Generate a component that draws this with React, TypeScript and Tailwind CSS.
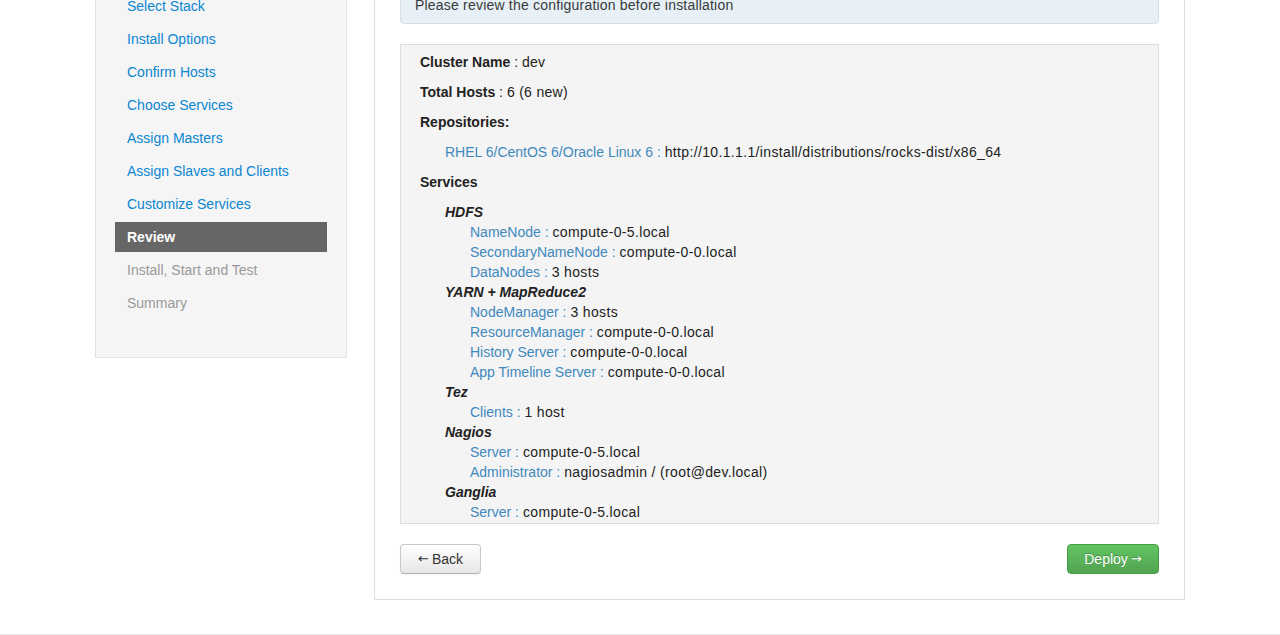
import React from "react";

const steps: { label: string; state: "done" | "active" | "disabled" }[] = [
  { label: "Get Started", state: "done" },
  { label: "Select Stack", state: "done" },
  { label: "Install Options", state: "done" },
  { label: "Confirm Hosts", state: "done" },
  { label: "Choose Services", state: "done" },
  { label: "Assign Masters", state: "done" },
  { label: "Assign Slaves and Clients", state: "done" },
  { label: "Customize Services", state: "done" },
  { label: "Review", state: "active" },
  { label: "Install, Start and Test", state: "disabled" },
  { label: "Summary", state: "disabled" },
];

const services: { name: string; comps: [string, string][] }[] = [
  {
    name: "HDFS",
    comps: [
      ["NameNode", "compute-0-5.local"],
      ["SecondaryNameNode", "compute-0-0.local"],
      ["DataNodes", "3 hosts"],
    ],
  },
  {
    name: "YARN + MapReduce2",
    comps: [
      ["NodeManager", "3 hosts"],
      ["ResourceManager", "compute-0-0.local"],
      ["History Server", "compute-0-0.local"],
      ["App Timeline Server", "compute-0-0.local"],
    ],
  },
  { name: "Tez", comps: [["Clients", "1 host"]] },
  {
    name: "Nagios",
    comps: [
      ["Server", "compute-0-5.local"],
      ["Administrator", "nagiosadmin / (root@dev.local)"],
    ],
  },
  {
    name: "Ganglia",
    comps: [
      ["Server", "compute-0-5.local"],
      ["Monitors", "6 hosts"],
    ],
  },
  {
    name: "ZooKeeper",
    comps: [["Servers", "3 hosts"]],
  },
];

export default function App() {
  return (
    <div
      className="h-[635px] overflow-hidden bg-white text-[14px] text-[#333]"
      style={{ fontFamily: '"Liberation Sans", Arial, sans-serif' }}
    >
      <div className="-mt-[80px] flex items-start pl-[95px]">
        {/* Sidebar */}
        <div className="w-[252px] shrink-0 border border-[#e3e3e3] bg-[#f5f5f5] px-[19px] pt-[37px] pb-[39px]">
          <ul className="flex flex-col gap-[3px]">
            {steps.map((s) => (
              <li
                key={s.label}
                className={
                  s.state === "active"
                    ? "h-[30px] bg-[#666666] px-3 leading-[30px] font-bold text-white"
                    : s.state === "done"
                    ? "h-[30px] px-3 leading-[30px] text-[#0b86d1]"
                    : "h-[30px] px-3 leading-[30px] text-[#999999]"
                }
              >
                {s.label}
              </li>
            ))}
          </ul>
        </div>

        {/* Main panel */}
        <div className="ml-[27px] w-[811px] shrink-0 border border-[#dddddd] bg-white px-[25px] pt-[25px] pb-[25px]">
          <h2 className="h-[40px] text-[24px] leading-[40px]">Review</h2>
          <div className="rounded-[4px] border border-[#d3dfe7] bg-[#e6f0f6] py-[8px] pl-[14px] leading-[20px] tracking-[0.2px] text-[#3a3a3a]">
            Please review the configuration before installation
          </div>

          <div className="mt-[20px] h-[480px] overflow-hidden border border-[#dddddd] bg-[#f4f4f4] pl-[19px] pt-[2px]">
            <div className="h-[30px] leading-[30px] text-[#222]">
              <b>Cluster Name</b> : <span className="tracking-[0.3px]">dev</span>
            </div>
            <div className="h-[30px] leading-[30px] text-[#222]">
              <b>Total Hosts</b> : <span className="tracking-[0.3px]">6 (6 new)</span>
            </div>
            <div className="h-[30px] leading-[30px] font-bold text-[#222]">Repositories:</div>
            <div className="h-[30px] pl-[25px] leading-[30px] text-[#222]">
              <span className="text-[#3f88bd]">RHEL 6/CentOS 6/Oracle Linux 6 : </span>
              <span className="tracking-[0.35px]">http://10.1.1.1/install/distributions/rocks-dist/x86_64</span>
            </div>
            <div className="h-[30px] leading-[30px] font-bold text-[#222]">Services</div>
            <div className="mt-[5px] pl-[25px] leading-[20px] text-[#222]">
              {services.map((svc) => (
                <div key={svc.name}>
                  <div className="font-bold italic">{svc.name}</div>
                  {svc.comps.map(([k, v], i) => (
                    <div key={k + i} className="pl-[25px]">
                      <span className="text-[#3f88bd]">{k} : </span>
                      <span className="tracking-[0.35px]">{v}</span>
                    </div>
                  ))}
                </div>
              ))}
            </div>
          </div>

          <div className="mt-[20px] flex items-center justify-between">
            <button className="flex h-[30px] w-[81px] items-center justify-center gap-[3px] rounded-[4px] border border-[#c8c8c8] border-b-[#b3b3b3] bg-gradient-to-b from-white to-[#e6e6e6] text-[14px] text-[#333] shadow-[inset_0_1px_0_rgba(255,255,255,0.2),0_1px_2px_rgba(0,0,0,0.05)]">
              <span style={{ fontFamily: '"DejaVu Sans", sans-serif' }} className="text-[13px]">←</span>
              <span>Back</span>
            </button>
            <button className="flex h-[30px] w-[92px] items-center justify-center gap-[3px] rounded-[4px] border border-[#4a9a4a] bg-gradient-to-b from-[#62c462] to-[#51a351] text-[14px] text-white [text-shadow:0_-1px_0_rgba(0,0,0,0.25)]">
              <span>Deploy</span>
              <span style={{ fontFamily: '"DejaVu Sans", sans-serif' }} className="text-[13px]">→</span>
            </button>
          </div>
        </div>
      </div>
      <div className="mt-[34px] border-t border-[#e5e5e5]" />
    </div>
  );
}
